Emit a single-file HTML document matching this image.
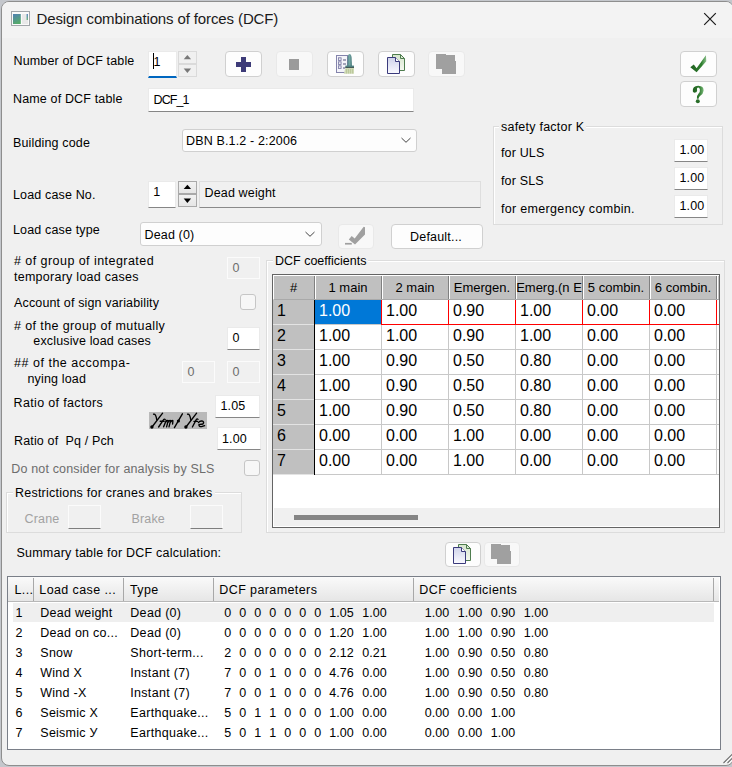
<!DOCTYPE html><html><head><meta charset="utf-8"><style>
*{box-sizing:border-box;margin:0;padding:0}
html,body{width:732px;height:767px;overflow:hidden;background:#c4c7cc;font-family:"Liberation Sans",sans-serif;}
.win{position:absolute;left:1px;top:1px;width:733px;height:765px;background:#f0f0f0;border:1px solid #8e8e8e;border-radius:8px;overflow:hidden}
.tb{position:absolute;left:0;top:0;width:100%;height:36px;background:#f3f3f3}
.a{position:absolute;white-space:nowrap}
.t{position:absolute;white-space:nowrap;font-size:12.5px;color:#000;line-height:15px;letter-spacing:0.15px}
.g{color:#6d6d6d}
.inp{position:absolute;background:#fff;border:1px solid #eaeaea;border-bottom:1px solid #868686}
.dis{position:absolute;background:#f0f0f0;border:1px solid #fbfbfb}
.btn{position:absolute;background:#fdfdfd;border:1px solid #d0d0d0;border-radius:4px}
.btnd{position:absolute;background:#f8f8f8;border:1px solid #e9e9e9;border-radius:4px}
.gb{position:absolute;border:1px solid #dcdcdc;box-shadow:inset 1px 1px 0 #fff}
.gt{position:absolute;background:#f0f0f0;padding:0 2px;font-size:12.5px;line-height:15px;white-space:nowrap;letter-spacing:0.23px}
.chk{position:absolute;width:16px;height:16px;border:1px solid #c6c6c6;border-radius:3px;background:#f7f7f7}
.spin{position:absolute;background:#f0f0f0;border:1px solid #dadada}
.gc{position:absolute;font-size:16px;line-height:18px;white-space:nowrap}
.gh{position:absolute;font-size:13px;line-height:15px;white-space:nowrap;text-align:center;overflow:hidden}
.lv{position:absolute;font-size:12.5px;line-height:15px;white-space:nowrap}
</style></head><body>
<div class="win"><div class="tb"></div></div>
<svg class="a" style="left:11px;top:11px" width="19" height="15" viewBox="0 0 19 15">
 <defs><linearGradient id="g1" x1="0" y1="0" x2="0.4" y2="1"><stop offset="0" stop-color="#5080b4"/><stop offset="1" stop-color="#56aa6c"/></linearGradient>
 <linearGradient id="g1b" x1="0" y1="0" x2="0" y2="1"><stop offset="0" stop-color="#4f7fc0"/><stop offset="1" stop-color="#60b070"/></linearGradient></defs>
 <rect x="0.5" y="0.5" width="18" height="14" fill="#fafafa" stroke="#a2a6aa"/>
 <rect x="2" y="3" width="7.8" height="10" fill="url(#g1)"/>
 <rect x="11" y="3" width="6" height="10" fill="#e9e9e9"/>
 <rect x="15.6" y="3" width="1.3" height="6" fill="url(#g1b)"/>
</svg>
<div class="a" style="left:36.5px;top:10px;font-size:15px;line-height:18px;color:#1a1a1a;letter-spacing:-0.12px">Design combinations of forces (DCF)</div>
<svg class="a" style="left:703px;top:12px" width="14" height="14" viewBox="0 0 14 14"><path d="M1.2 1.2L12.8 12.8M12.8 1.2L1.2 12.8" stroke="#1a1a1a" stroke-width="1.2"/></svg>
<div class="t" style="left:13.5px;top:54.2px;">Number of DCF table</div>
<div class="inp" style="left:148px;top:51px;width:29px;height:27px;border-bottom:2px solid #0067c0"></div>
<div class="t" style="left:153.5px;top:55.2px;">1</div>
<div class="a" style="left:153px;top:53px;width:1px;height:16px;background:#000"></div>
<div class="spin" style="left:178px;top:51px;width:19px;height:13px"></div>
<div class="spin" style="left:178px;top:64px;width:19px;height:13px"></div>
<svg class="a" style="left:0;top:0" width="732" height="90" viewBox="0 0 732 90"><path d="M183.7 59.2L187.4 55L191.1 59.2Z" fill="#787878"/><path d="M183.7 68.6L187.4 72.9L191.1 68.6Z" fill="#787878"/></svg>
<div class="btn" style="left:225px;top:51px;width:37px;height:26px"></div>
<svg class="a" style="left:0;top:0" width="732" height="120" viewBox="0 0 732 120"><path d="M241 57h5v5h5v5h-5v5h-5v-5h-5v-5h5z" fill="#3d3b78"/></svg>
<div class="btnd" style="left:276px;top:51px;width:37px;height:26px"></div>
<div class="a" style="left:289px;top:59px;width:10px;height:11px;background:#9b9b9b"></div>
<div class="btn" style="left:327px;top:51px;width:37px;height:26px"></div>
<div class="btn" style="left:378px;top:51px;width:37px;height:26px"></div>
<div class="btnd" style="left:428px;top:51px;width:37px;height:26px"></div>
<div class="btn" style="left:680px;top:51px;width:37px;height:26px"></div>
<div class="btn" style="left:680px;top:81px;width:37px;height:26px"></div>
<svg class="a" style="left:0;top:0" width="732" height="120" viewBox="0 0 732 120">
<defs>
<linearGradient id="pg" x1="0" y1="0" x2="0" y2="1"><stop offset="0" stop-color="#cfd3ea"/><stop offset="1" stop-color="#fafaff"/></linearGradient>
<linearGradient id="gg" x1="0" y1="0" x2="0" y2="1"><stop offset="0" stop-color="#d5e5cc"/><stop offset="1" stop-color="#f4f8f0"/></linearGradient>
<linearGradient id="hg" x1="0" y1="0" x2="1" y2="0"><stop offset="0" stop-color="#4a8282"/><stop offset="0.45" stop-color="#74a6a4"/><stop offset="1" stop-color="#4a7c7c"/></linearGradient>
<linearGradient id="ck" x1="0" y1="0" x2="1" y2="0"><stop offset="0" stop-color="#1f5f1f"/><stop offset="0.7" stop-color="#2f7f2f"/><stop offset="1" stop-color="#8cc08c"/></linearGradient>
</defs>
<!-- checklist + brush -->
<rect x="336.5" y="55.5" width="11" height="17" fill="#f4f4fa" stroke="#8484ac"/>
<rect x="338.5" y="57.8" width="2.6" height="2.6" fill="#e8e8f0" stroke="#7474a0" stroke-width="0.8"/>
<rect x="338.5" y="61.8" width="2.6" height="2.6" fill="#e8e8f0" stroke="#7474a0" stroke-width="0.8"/>
<rect x="338.5" y="65.8" width="2.6" height="2.6" fill="#e8e8f0" stroke="#7474a0" stroke-width="0.8"/>
<path d="M343 60h3M343 64h3M343 68h2" stroke="#55557a" stroke-width="1"/>
<path d="M347.4 66L347.7 57.5Q348 54 349.6 54Q351.2 54 351.6 57.5L352 66z" fill="url(#hg)"/>
<path d="M345.3 65.6h8.7v2.2h-8.7z" fill="#4f8080"/>
<path d="M345.3 67.2h8.7v0.8h-8.7z" fill="#3e4a48"/>
<path d="M345.3 68h8.7v5.8h-10.3l0.6-1.6z" fill="#cfdab6"/>
<path d="M346.5 69v4.5M348.5 69v4.5M350.5 69v4.5M352.5 69v4.5" stroke="#aebc8c" stroke-width="0.6"/>
<!-- copy -->
<g id="cpy">
<path d="M392.5 54.5h8l4 4v12h-12z" fill="url(#gg)" stroke="#4e7c4e"/>
<path d="M400.5 54.5v4h4" fill="none" stroke="#4e7c4e"/>
<path d="M387.5 57.5h8l4 4v12h-12z" fill="url(#pg)" stroke="#3a3a7c"/>
<path d="M395.5 57.5v4h4" fill="#fff" stroke="#3a3a7c"/>
</g>
<!-- disabled copy -->
<path d="M436 54H446V55H455V61H456V74H442V69H436Z" fill="#a0a0a0"/>
<!-- check -->
<path d="M690.3 67.3L693.8 64.6L696.6 68.2L705.9 55.2L706.3 61.2L696.6 72.2Z" fill="url(#ck)"/>
</svg>
<svg class="a" style="left:0;top:0" width="732" height="120" viewBox="0 0 732 120"><defs><linearGradient id="qg" x1="0" y1="0" x2="1" y2="0"><stop offset="0" stop-color="#1f5f1f"/><stop offset="0.6" stop-color="#2f7a2f"/><stop offset="1" stop-color="#7ab87a"/></linearGradient></defs><path d="M692.8 91.2Q692.3 85.8 698.2 85.7Q704 85.9 703.6 90.8Q703.3 93.8 700.3 95.8Q698.7 96.9 698.6 98.8L696.9 98.8Q696.6 95.6 698.6 93.6Q700.3 91.6 699.9 89.2Q699.4 87.3 698 87.4Q696.6 87.7 697 89.4Q697.6 91.8 695.2 92.6Q693.1 92.9 692.8 91.2Z" fill="url(#qg)"/><circle cx="697.8" cy="101.2" r="2" fill="#2a6e2a"/></svg>
<div class="t" style="left:13px;top:92.2px;">Name of DCF table</div>
<div class="inp" style="left:148px;top:88px;width:266px;height:24px"></div>
<div class="t" style="left:153.5px;top:93.2px;letter-spacing:-0.9px">DCF_1</div>
<div class="t" style="left:13px;top:135.7px;">Building code</div>
<div class="inp" style="left:182px;top:129px;width:235px;height:23px;border:1px solid #d0d0d0;border-radius:3px;background:#fdfdfd"></div>
<div class="t" style="left:186px;top:134.2px;">DBN B.1.2 - 2:2006</div>
<svg class="a" style="left:400px;top:136px" width="12" height="8" viewBox="0 0 12 8"><path d="M1.5 2L6 6.3L10.5 2" fill="none" stroke="#444" stroke-width="1"/></svg>
<div class="gb" style="left:493px;top:126px;width:230px;height:99px"></div>
<div class="gt" style="left:499px;top:120px">safety factor K</div>
<div class="t" style="left:501px;top:146.2px;">for ULS</div>
<div class="t" style="left:501px;top:174.2px;">for SLS</div>
<div class="t" style="left:501px;top:201.7px;letter-spacing:0.32px">for emergency combin.</div>
<div class="inp" style="left:674px;top:139px;width:34px;height:23px"></div>
<div class="t" style="left:679.5px;top:142.7px;">1.00</div>
<div class="inp" style="left:674px;top:167px;width:34px;height:23px"></div>
<div class="t" style="left:679.5px;top:170.7px;">1.00</div>
<div class="inp" style="left:674px;top:195px;width:34px;height:23px"></div>
<div class="t" style="left:679.5px;top:198.7px;">1.00</div>
<div class="t" style="left:13px;top:187.7px;">Load case No.</div>
<div class="inp" style="left:148px;top:181px;width:28px;height:27px"></div>
<div class="t" style="left:153.3px;top:184.8px;">1</div>
<div class="spin" style="left:178px;top:181px;width:19px;height:13px;border-color:#a9a9a9;background:linear-gradient(#f2f2f2,#e6e6e6)"></div>
<div class="spin" style="left:178px;top:194px;width:19px;height:13px;border-color:#a9a9a9;background:linear-gradient(#f2f2f2,#e6e6e6)"></div>
<svg class="a" style="left:0;top:170px" width="732" height="50" viewBox="0 170 732 50"><path d="M183.7 189L187.4 184.8L191.1 189Z" fill="#000"/><path d="M183.7 198.6L187.4 203.1L191.1 198.6Z" fill="#000"/></svg>
<div class="a" style="left:199px;top:181px;width:282px;height:27px;background:#f0f0f0;border:1px solid #dedede;border-bottom:1px solid #8a8a8a"></div>
<div class="t" style="left:204.5px;top:185.5px;">Dead weight</div>
<div class="t" style="left:13px;top:223.4px;">Load case type</div>
<div class="inp" style="left:140px;top:222px;width:182px;height:24px;border:1px solid #d0d0d0;border-radius:3px;background:#fdfdfd"></div>
<div class="t" style="left:144.5px;top:227.8px;">Dead (0)</div>
<svg class="a" style="left:304px;top:230px" width="12" height="8" viewBox="0 0 12 8"><path d="M1.5 2L6 6.3L10.5 2" fill="none" stroke="#444" stroke-width="1"/></svg>
<div class="btnd" style="left:337.5px;top:223.5px;width:36px;height:25px"></div>
<svg class="a" style="left:0;top:200px" width="732" height="60" viewBox="0 200 732 60"><path d="M348.8 239.4L351.7 236.1L354.7 238.4L363.7 226.8L365 227.2V234.4L355 244.6Z" fill="#a0a0a0"/><path d="M345 242.9H351.8V244.6H345Z" fill="#a0a0a0"/></svg>
<div class="btn" style="left:390.5px;top:223.5px;width:92.5px;height:25.5px"></div>
<div class="t" style="left:410px;top:229.7px;letter-spacing:0.2px">Default...</div>
<div class="t" style="left:14px;top:254.2px;letter-spacing:0.45px"># of group of integrated</div>
<div class="t" style="left:14px;top:270.0px;letter-spacing:0.26px">temporary load cases</div>
<div class="dis" style="left:227px;top:257px;width:33px;height:22px"></div>
<div class="t g" style="left:232.5px;top:261.2px;">0</div>
<div class="t" style="left:14px;top:296.2px;">Account of sign variability</div>
<div class="chk" style="left:240px;top:294px"></div>
<div class="t" style="left:14px;top:318.5px;letter-spacing:0.39px"># of the group of mutually</div>
<div class="t" style="left:33.3px;top:334.2px;">exclusive load cases</div>
<div class="inp" style="left:227px;top:327px;width:33px;height:23px"></div>
<div class="t" style="left:232.5px;top:331.2px;">0</div>
<div class="t" style="left:14px;top:356.2px;letter-spacing:0.52px">## of the accompa-</div>
<div class="t" style="left:27.5px;top:371.7px;">nying load</div>
<div class="dis" style="left:182px;top:361px;width:33px;height:22px"></div>
<div class="dis" style="left:227px;top:361px;width:33px;height:22px"></div>
<div class="t g" style="left:187.5px;top:365.2px;">0</div>
<div class="t g" style="left:232.5px;top:365.2px;">0</div>
<div class="t" style="left:13.5px;top:396.0px;letter-spacing:0.35px">Ratio of factors</div>
<div class="inp" style="left:215px;top:395px;width:45px;height:23px"></div>
<div class="t" style="left:220.5px;top:399.2px;">1.05</div>
<div class="a" style="left:149px;top:412px;width:58px;height:17px;background:#b9b9b9"></div>
<svg class="a" style="left:149px;top:412px" width="58" height="17" viewBox="0 0 58 17"><g fill="none" stroke="#000" stroke-width="1.35" stroke-linecap="round"><path d="M4.6 2.2Q6.8 1.5 7.8 7.8"/><path d="M13.6 1.2L3 15"/><circle cx="2.9" cy="15" r="1" fill="#000"/><path d="M9.6 15L14.6 7.6Q15.6 6.6 16.2 7.6"/><path d="M11.2 9.2h4"/><path d="M14.6 14.8L17.2 8.4M17 10Q18.2 7.8 19.2 8.6L17.6 14.8M19.4 10Q20.6 7.8 21.6 8.6L20 14.8M21.8 10Q23 7.8 23.9 8.8L23.6 12"/><path d="M25.4 15.6L33.4 1.8"/><circle cx="29.4" cy="9" r="0.9" fill="#000"/><path d="M38.6 2.2Q40.8 1.5 41.8 7.8"/><path d="M47.6 1.2L37 15"/><circle cx="36.9" cy="15" r="1" fill="#000"/><path d="M43.4 15L47.4 7.4Q48.2 6.4 49 7.4"/><path d="M45 9.4h3.6"/><path d="M49.4 10.6Q51 8.4 53.8 9.2Q55.4 10.4 53.8 12L50 12.6Q49.6 14.8 52.6 14.6L55.6 13.6"/></g></svg>
<div class="t" style="left:14px;top:434.2px;">Ratio of &nbsp;Pq / Pch</div>
<div class="inp" style="left:217px;top:427px;width:44px;height:23px"></div>
<div class="t" style="left:222px;top:431.5px;">1.00</div>
<div class="t g" style="left:11.3px;top:462.2px;">Do not consider for analysis by SLS</div>
<div class="chk" style="left:244px;top:460px"></div>
<div class="gb" style="left:6px;top:492px;width:236px;height:41px"></div>
<div class="gt" style="left:13px;top:485.5px">Restrictions for cranes and brakes</div>
<div class="t" style="left:24.6px;top:512.0px;color:#a2a2a2">Crane</div>
<div class="t" style="left:131.5px;top:512.0px;color:#a2a2a2">Brake</div>
<div class="dis" style="left:68px;top:505px;width:33px;height:24px;border-bottom:1px solid #7e7e7e"></div>
<div class="dis" style="left:190px;top:505px;width:33px;height:24px;border-bottom:1px solid #7e7e7e"></div>
<div class="gb" style="left:266px;top:260px;width:459px;height:273px"></div>
<div class="gt" style="left:273px;top:253.5px;letter-spacing:0">DCF coefficients</div>
<div class="a" style="left:272px;top:274px;width:448px;height:254px;background:#fff;border:1px solid #646464;box-shadow:inset 1px 1px 0 #fff"></div>
<div class="a" style="left:273px;top:275px;width:446px;height:25px;background:#c0c0c0;border-top:1px solid #fff;border-left:1px solid #fff;border-bottom:1px solid #a9a9a9"></div>
<div class="a" style="left:314px;top:276px;width:1px;height:23px;background:#808080"></div>
<div class="a" style="left:315px;top:276px;width:1px;height:23px;background:#fff"></div>
<div class="a" style="left:381px;top:276px;width:1px;height:23px;background:#808080"></div>
<div class="a" style="left:382px;top:276px;width:1px;height:23px;background:#fff"></div>
<div class="a" style="left:448px;top:276px;width:1px;height:23px;background:#808080"></div>
<div class="a" style="left:449px;top:276px;width:1px;height:23px;background:#fff"></div>
<div class="a" style="left:515px;top:276px;width:1px;height:23px;background:#808080"></div>
<div class="a" style="left:516px;top:276px;width:1px;height:23px;background:#fff"></div>
<div class="a" style="left:582px;top:276px;width:1px;height:23px;background:#808080"></div>
<div class="a" style="left:583px;top:276px;width:1px;height:23px;background:#fff"></div>
<div class="a" style="left:649px;top:276px;width:1px;height:23px;background:#808080"></div>
<div class="a" style="left:650px;top:276px;width:1px;height:23px;background:#fff"></div>
<div class="a" style="left:716px;top:276px;width:1px;height:23px;background:#808080"></div>
<div class="a" style="left:717px;top:276px;width:1px;height:23px;background:#fff"></div>
<div class="gh" style="left:273px;top:280px;width:41px">#</div>
<div class="gh" style="left:315px;top:280px;width:66px">1 main</div>
<div class="gh" style="left:382px;top:280px;width:66px">2 main</div>
<div class="gh" style="left:449px;top:280px;width:66px">Emergen.</div>
<div class="gh" style="left:516px;top:280px;width:66px">Emerg.(n E</div>
<div class="gh" style="left:583px;top:280px;width:66px">5 combin.</div>
<div class="gh" style="left:650px;top:280px;width:66px">6 combin.</div>
<div class="a" style="left:273px;top:300px;width:41px;height:175px;background:#c0c0c0"></div>
<div class="a" style="left:314px;top:300px;width:1px;height:175px;background:#000"></div>
<div class="a" style="left:273px;top:324px;width:41px;height:1px;background:#e3e3e3"></div>
<div class="a" style="left:315px;top:324px;width:404px;height:1px;background:#c8c8c8"></div>
<div class="gc" style="left:277px;top:302.0px">1</div>
<div class="a" style="left:273px;top:349px;width:41px;height:1px;background:#e3e3e3"></div>
<div class="a" style="left:315px;top:349px;width:404px;height:1px;background:#c8c8c8"></div>
<div class="gc" style="left:277px;top:327.0px">2</div>
<div class="a" style="left:273px;top:374px;width:41px;height:1px;background:#e3e3e3"></div>
<div class="a" style="left:315px;top:374px;width:404px;height:1px;background:#c8c8c8"></div>
<div class="gc" style="left:277px;top:352.0px">3</div>
<div class="a" style="left:273px;top:399px;width:41px;height:1px;background:#e3e3e3"></div>
<div class="a" style="left:315px;top:399px;width:404px;height:1px;background:#c8c8c8"></div>
<div class="gc" style="left:277px;top:377.0px">4</div>
<div class="a" style="left:273px;top:424px;width:41px;height:1px;background:#e3e3e3"></div>
<div class="a" style="left:315px;top:424px;width:404px;height:1px;background:#c8c8c8"></div>
<div class="gc" style="left:277px;top:402.0px">5</div>
<div class="a" style="left:273px;top:449px;width:41px;height:1px;background:#e3e3e3"></div>
<div class="a" style="left:315px;top:449px;width:404px;height:1px;background:#c8c8c8"></div>
<div class="gc" style="left:277px;top:427.0px">6</div>
<div class="a" style="left:273px;top:474px;width:41px;height:1px;background:#e3e3e3"></div>
<div class="a" style="left:315px;top:474px;width:404px;height:1px;background:#c8c8c8"></div>
<div class="gc" style="left:277px;top:452.0px">7</div>
<div class="a" style="left:381px;top:300px;width:1px;height:175px;background:#c8c8c8"></div>
<div class="a" style="left:448px;top:300px;width:1px;height:175px;background:#c8c8c8"></div>
<div class="a" style="left:515px;top:300px;width:1px;height:175px;background:#c8c8c8"></div>
<div class="a" style="left:582px;top:300px;width:1px;height:175px;background:#c8c8c8"></div>
<div class="a" style="left:649px;top:300px;width:1px;height:175px;background:#c8c8c8"></div>
<div class="a" style="left:716px;top:300px;width:1px;height:175px;background:#c8c8c8"></div>
<div class="a" style="left:315px;top:300px;width:66px;height:24px;background:#0078d7"></div>
<div class="gc" style="left:319px;top:302.0px;color:#fff">1.00</div>
<div class="gc" style="left:386px;top:302.0px">1.00</div>
<div class="gc" style="left:453px;top:302.0px">0.90</div>
<div class="gc" style="left:520px;top:302.0px">1.00</div>
<div class="gc" style="left:587px;top:302.0px">0.00</div>
<div class="gc" style="left:654px;top:302.0px">0.00</div>
<div class="gc" style="left:319px;top:327.0px">1.00</div>
<div class="gc" style="left:386px;top:327.0px">1.00</div>
<div class="gc" style="left:453px;top:327.0px">0.90</div>
<div class="gc" style="left:520px;top:327.0px">1.00</div>
<div class="gc" style="left:587px;top:327.0px">0.00</div>
<div class="gc" style="left:654px;top:327.0px">0.00</div>
<div class="gc" style="left:319px;top:352.0px">1.00</div>
<div class="gc" style="left:386px;top:352.0px">0.90</div>
<div class="gc" style="left:453px;top:352.0px">0.50</div>
<div class="gc" style="left:520px;top:352.0px">0.80</div>
<div class="gc" style="left:587px;top:352.0px">0.00</div>
<div class="gc" style="left:654px;top:352.0px">0.00</div>
<div class="gc" style="left:319px;top:377.0px">1.00</div>
<div class="gc" style="left:386px;top:377.0px">0.90</div>
<div class="gc" style="left:453px;top:377.0px">0.50</div>
<div class="gc" style="left:520px;top:377.0px">0.80</div>
<div class="gc" style="left:587px;top:377.0px">0.00</div>
<div class="gc" style="left:654px;top:377.0px">0.00</div>
<div class="gc" style="left:319px;top:402.0px">1.00</div>
<div class="gc" style="left:386px;top:402.0px">0.90</div>
<div class="gc" style="left:453px;top:402.0px">0.50</div>
<div class="gc" style="left:520px;top:402.0px">0.80</div>
<div class="gc" style="left:587px;top:402.0px">0.00</div>
<div class="gc" style="left:654px;top:402.0px">0.00</div>
<div class="gc" style="left:319px;top:427.0px">0.00</div>
<div class="gc" style="left:386px;top:427.0px">0.00</div>
<div class="gc" style="left:453px;top:427.0px">1.00</div>
<div class="gc" style="left:520px;top:427.0px">0.00</div>
<div class="gc" style="left:587px;top:427.0px">0.00</div>
<div class="gc" style="left:654px;top:427.0px">0.00</div>
<div class="gc" style="left:319px;top:452.0px">0.00</div>
<div class="gc" style="left:386px;top:452.0px">0.00</div>
<div class="gc" style="left:453px;top:452.0px">1.00</div>
<div class="gc" style="left:520px;top:452.0px">0.00</div>
<div class="gc" style="left:587px;top:452.0px">0.00</div>
<div class="gc" style="left:654px;top:452.0px">0.00</div>
<div class="a" style="left:381px;top:300px;width:1px;height:25px;background:#ff0000"></div>
<div class="a" style="left:448px;top:300px;width:1px;height:25px;background:#ff0000"></div>
<div class="a" style="left:515px;top:300px;width:1px;height:25px;background:#ff0000"></div>
<div class="a" style="left:582px;top:300px;width:1px;height:25px;background:#ff0000"></div>
<div class="a" style="left:649px;top:300px;width:1px;height:25px;background:#ff0000"></div>
<div class="a" style="left:716px;top:300px;width:1px;height:25px;background:#ff0000"></div>
<div class="a" style="left:381px;top:324px;width:338px;height:1px;background:#ff0000"></div>
<div class="a" style="left:274px;top:508px;width:445px;height:18px;background:#f0f0f0"></div>
<div class="a" style="left:294px;top:515px;width:124px;height:5px;background:#858585"></div>
<div class="t" style="left:16.5px;top:546.2px;letter-spacing:0.22px">Summary table for DCF calculation:</div>
<div class="btn" style="left:444.5px;top:541.5px;width:36px;height:25px"></div>
<div class="btnd" style="left:483.5px;top:541.5px;width:36px;height:25px"></div>
<svg class="a" style="left:0;top:0" width="732" height="767" viewBox="0 0 732 767">
<defs>
<linearGradient id="pg2" x1="0" y1="0" x2="0" y2="1"><stop offset="0" stop-color="#cfd3ea"/><stop offset="1" stop-color="#fafaff"/></linearGradient>
<linearGradient id="gg2" x1="0" y1="0" x2="0" y2="1"><stop offset="0" stop-color="#d5e5cc"/><stop offset="1" stop-color="#f4f8f0"/></linearGradient>
</defs>
<g transform="translate(66 490)">
<path d="M392.5 54.5h8l4 4v12h-12z" fill="url(#gg2)" stroke="#4e7c4e"/>
<path d="M400.5 54.5v4h4" fill="none" stroke="#4e7c4e"/>
<path d="M387.5 57.5h8l4 4v12h-12z" fill="url(#pg2)" stroke="#3a3a7c"/>
<path d="M395.5 57.5v4h4" fill="#fff" stroke="#3a3a7c"/>
</g>
<path d="M491 544H501V545H510V551H511V564H497V559H491Z" fill="#a0a0a0"/>
<path d="M723.5 763L732.5 754M727.5 763L732.5 758" stroke="#6e6e6e" stroke-width="1.1"/><path d="M724.5 763.5L732.5 755.5M728.5 763.5L732.5 759.5" stroke="#fff" stroke-width="0.8" opacity="0.8"/>
</svg>
<div class="a" style="left:7px;top:576px;width:714px;height:174px;background:#fff;border:1px solid #7a7f88"></div>
<div class="a" style="left:8px;top:577px;width:711px;height:24.5px;background:linear-gradient(#fafafa,#e6e6e6);border-bottom:1px solid #b8b8b8"></div>
<div class="a" style="left:32.5px;top:578px;width:1px;height:23px;background:#a8a8a8"></div>
<div class="a" style="left:122.5px;top:578px;width:1px;height:23px;background:#a8a8a8"></div>
<div class="a" style="left:212.7px;top:578px;width:1px;height:23px;background:#a8a8a8"></div>
<div class="a" style="left:412.7px;top:578px;width:1px;height:23px;background:#a8a8a8"></div>
<div class="a" style="left:713px;top:578px;width:1px;height:23px;background:#a8a8a8"></div>
<div class="lv" style="left:14.5px;top:583.0px;letter-spacing:0.4px">L...</div>
<div class="lv" style="left:39.3px;top:583.0px;letter-spacing:0.4px">Load case ...</div>
<div class="lv" style="left:130px;top:583.0px;letter-spacing:0.4px">Type</div>
<div class="lv" style="left:219.3px;top:583.0px;letter-spacing:0.4px">DCF parameters</div>
<div class="lv" style="left:419.3px;top:583.0px;letter-spacing:0.4px">DCF coefficients</div>
<div class="a" style="left:13px;top:602.5px;width:701px;height:19px;background:#efefef"></div>
<div class="lv" style="left:15.5px;top:606.2px;">1</div>
<div class="lv" style="left:40.3px;top:606.2px;letter-spacing:0.25px">Dead weight</div>
<div class="lv" style="left:130.3px;top:606.2px;letter-spacing:0.3px">Dead (0)</div>
<div class="lv" style="left:224.3px;top:606.2px;">0</div>
<div class="lv" style="left:239.3px;top:606.2px;">0</div>
<div class="lv" style="left:254.3px;top:606.2px;">0</div>
<div class="lv" style="left:269.3px;top:606.2px;">0</div>
<div class="lv" style="left:284.3px;top:606.2px;">0</div>
<div class="lv" style="left:299.3px;top:606.2px;">0</div>
<div class="lv" style="left:314.3px;top:606.2px;">0</div>
<div class="lv" style="left:329.3px;top:606.2px;">1.05</div>
<div class="lv" style="left:362.3px;top:606.2px;">1.00</div>
<div class="lv" style="left:424.8px;top:606.2px;">1.00</div>
<div class="lv" style="left:457.8px;top:606.2px;">1.00</div>
<div class="lv" style="left:490.8px;top:606.2px;">0.90</div>
<div class="lv" style="left:523.8px;top:606.2px;">1.00</div>
<div class="lv" style="left:15.5px;top:626.2px;">2</div>
<div class="lv" style="left:40.3px;top:626.2px;letter-spacing:0.25px">Dead on co...</div>
<div class="lv" style="left:130.3px;top:626.2px;letter-spacing:0.3px">Dead (0)</div>
<div class="lv" style="left:224.3px;top:626.2px;">0</div>
<div class="lv" style="left:239.3px;top:626.2px;">0</div>
<div class="lv" style="left:254.3px;top:626.2px;">0</div>
<div class="lv" style="left:269.3px;top:626.2px;">0</div>
<div class="lv" style="left:284.3px;top:626.2px;">0</div>
<div class="lv" style="left:299.3px;top:626.2px;">0</div>
<div class="lv" style="left:314.3px;top:626.2px;">0</div>
<div class="lv" style="left:329.3px;top:626.2px;">1.20</div>
<div class="lv" style="left:362.3px;top:626.2px;">1.00</div>
<div class="lv" style="left:424.8px;top:626.2px;">1.00</div>
<div class="lv" style="left:457.8px;top:626.2px;">1.00</div>
<div class="lv" style="left:490.8px;top:626.2px;">0.90</div>
<div class="lv" style="left:523.8px;top:626.2px;">1.00</div>
<div class="lv" style="left:15.5px;top:646.2px;">3</div>
<div class="lv" style="left:40.3px;top:646.2px;letter-spacing:0.25px">Snow</div>
<div class="lv" style="left:130.3px;top:646.2px;letter-spacing:0.3px">Short-term...</div>
<div class="lv" style="left:224.3px;top:646.2px;">2</div>
<div class="lv" style="left:239.3px;top:646.2px;">0</div>
<div class="lv" style="left:254.3px;top:646.2px;">0</div>
<div class="lv" style="left:269.3px;top:646.2px;">0</div>
<div class="lv" style="left:284.3px;top:646.2px;">0</div>
<div class="lv" style="left:299.3px;top:646.2px;">0</div>
<div class="lv" style="left:314.3px;top:646.2px;">0</div>
<div class="lv" style="left:329.3px;top:646.2px;">2.12</div>
<div class="lv" style="left:362.3px;top:646.2px;">0.21</div>
<div class="lv" style="left:424.8px;top:646.2px;">1.00</div>
<div class="lv" style="left:457.8px;top:646.2px;">0.90</div>
<div class="lv" style="left:490.8px;top:646.2px;">0.50</div>
<div class="lv" style="left:523.8px;top:646.2px;">0.80</div>
<div class="lv" style="left:15.5px;top:666.2px;">4</div>
<div class="lv" style="left:40.3px;top:666.2px;letter-spacing:0.25px">Wind X</div>
<div class="lv" style="left:130.3px;top:666.2px;letter-spacing:0.3px">Instant (7)</div>
<div class="lv" style="left:224.3px;top:666.2px;">7</div>
<div class="lv" style="left:239.3px;top:666.2px;">0</div>
<div class="lv" style="left:254.3px;top:666.2px;">0</div>
<div class="lv" style="left:269.3px;top:666.2px;">1</div>
<div class="lv" style="left:284.3px;top:666.2px;">0</div>
<div class="lv" style="left:299.3px;top:666.2px;">0</div>
<div class="lv" style="left:314.3px;top:666.2px;">0</div>
<div class="lv" style="left:329.3px;top:666.2px;">4.76</div>
<div class="lv" style="left:362.3px;top:666.2px;">0.00</div>
<div class="lv" style="left:424.8px;top:666.2px;">1.00</div>
<div class="lv" style="left:457.8px;top:666.2px;">0.90</div>
<div class="lv" style="left:490.8px;top:666.2px;">0.50</div>
<div class="lv" style="left:523.8px;top:666.2px;">0.80</div>
<div class="lv" style="left:15.5px;top:686.2px;">5</div>
<div class="lv" style="left:40.3px;top:686.2px;letter-spacing:0.25px">Wind -X</div>
<div class="lv" style="left:130.3px;top:686.2px;letter-spacing:0.3px">Instant (7)</div>
<div class="lv" style="left:224.3px;top:686.2px;">7</div>
<div class="lv" style="left:239.3px;top:686.2px;">0</div>
<div class="lv" style="left:254.3px;top:686.2px;">0</div>
<div class="lv" style="left:269.3px;top:686.2px;">1</div>
<div class="lv" style="left:284.3px;top:686.2px;">0</div>
<div class="lv" style="left:299.3px;top:686.2px;">0</div>
<div class="lv" style="left:314.3px;top:686.2px;">0</div>
<div class="lv" style="left:329.3px;top:686.2px;">4.76</div>
<div class="lv" style="left:362.3px;top:686.2px;">0.00</div>
<div class="lv" style="left:424.8px;top:686.2px;">1.00</div>
<div class="lv" style="left:457.8px;top:686.2px;">0.90</div>
<div class="lv" style="left:490.8px;top:686.2px;">0.50</div>
<div class="lv" style="left:523.8px;top:686.2px;">0.80</div>
<div class="lv" style="left:15.5px;top:706.2px;">6</div>
<div class="lv" style="left:40.3px;top:706.2px;letter-spacing:0.25px">Seismic X</div>
<div class="lv" style="left:130.3px;top:706.2px;letter-spacing:0.3px">Earthquake...</div>
<div class="lv" style="left:224.3px;top:706.2px;">5</div>
<div class="lv" style="left:239.3px;top:706.2px;">0</div>
<div class="lv" style="left:254.3px;top:706.2px;">1</div>
<div class="lv" style="left:269.3px;top:706.2px;">1</div>
<div class="lv" style="left:284.3px;top:706.2px;">0</div>
<div class="lv" style="left:299.3px;top:706.2px;">0</div>
<div class="lv" style="left:314.3px;top:706.2px;">0</div>
<div class="lv" style="left:329.3px;top:706.2px;">1.00</div>
<div class="lv" style="left:362.3px;top:706.2px;">0.00</div>
<div class="lv" style="left:424.8px;top:706.2px;">0.00</div>
<div class="lv" style="left:457.8px;top:706.2px;">0.00</div>
<div class="lv" style="left:490.8px;top:706.2px;">1.00</div>
<div class="lv" style="left:15.5px;top:726.2px;">7</div>
<div class="lv" style="left:40.3px;top:726.2px;letter-spacing:0.25px">Seismic У</div>
<div class="lv" style="left:130.3px;top:726.2px;letter-spacing:0.3px">Earthquake...</div>
<div class="lv" style="left:224.3px;top:726.2px;">5</div>
<div class="lv" style="left:239.3px;top:726.2px;">0</div>
<div class="lv" style="left:254.3px;top:726.2px;">1</div>
<div class="lv" style="left:269.3px;top:726.2px;">1</div>
<div class="lv" style="left:284.3px;top:726.2px;">0</div>
<div class="lv" style="left:299.3px;top:726.2px;">0</div>
<div class="lv" style="left:314.3px;top:726.2px;">0</div>
<div class="lv" style="left:329.3px;top:726.2px;">1.00</div>
<div class="lv" style="left:362.3px;top:726.2px;">0.00</div>
<div class="lv" style="left:424.8px;top:726.2px;">0.00</div>
<div class="lv" style="left:457.8px;top:726.2px;">0.00</div>
<div class="lv" style="left:490.8px;top:726.2px;">1.00</div>
</body></html>
